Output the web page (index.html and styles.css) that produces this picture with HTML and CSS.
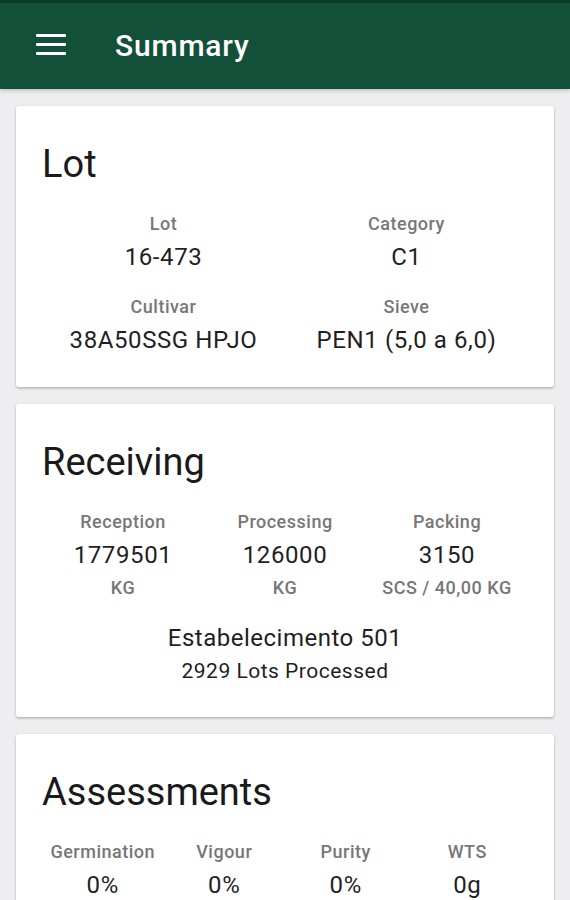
FILE: index.html
```html
<!DOCTYPE html>
<html lang="en">
<head>
<meta charset="utf-8">
<title>Summary</title>
<link rel="stylesheet" href="styles.css">
</head>
<body>
<header class="appbar">
  <span class="menu" aria-label="Menu">
    <span class="bar"></span><span class="bar"></span><span class="bar"></span>
  </span>
  <h1 class="appbar-title">Summary</h1>
</header>
<main class="content">
  <section class="card">
    <h2 class="card-title">Lot</h2>
    <div class="grid cols-2">
      <div class="item"><div class="label">Lot</div><div class="value">16-473</div></div>
      <div class="item"><div class="label">Category</div><div class="value">C1</div></div>
      <div class="item"><div class="label">Cultivar</div><div class="value">38A50SSG HPJO</div></div>
      <div class="item"><div class="label">Sieve</div><div class="value">PEN1 (5,0 a 6,0)</div></div>
    </div>
  </section>
  <section class="card">
    <h2 class="card-title">Receiving</h2>
    <div class="grid cols-3">
      <div class="item"><div class="label">Reception</div><div class="value">1779501</div><div class="unit">KG</div></div>
      <div class="item"><div class="label">Processing</div><div class="value">126000</div><div class="unit">KG</div></div>
      <div class="item"><div class="label">Packing</div><div class="value">3150</div><div class="unit">SCS / 40,00 KG</div></div>
    </div>
    <div class="place">
      <div class="place-name">Estabelecimento 501</div>
      <div class="place-lots">2929 Lots Processed</div>
    </div>
  </section>
  <section class="card">
    <h2 class="card-title">Assessments</h2>
    <div class="grid cols-4">
      <div class="item"><div class="label">Germination</div><div class="value">0%</div></div>
      <div class="item"><div class="label">Vigour</div><div class="value">0%</div></div>
      <div class="item"><div class="label">Purity</div><div class="value">0%</div></div>
      <div class="item"><div class="label">WTS</div><div class="value">0g</div></div>
    </div>
  </section>
</main>
</body>
</html>
```
FILE: styles.css
```css
* { box-sizing: border-box; }
html, body { margin: 0; padding: 0; }
body {
  background: #eeeef1;
  font-family: Roboto, "Liberation Sans", sans-serif;
  color: #212121;
  height: 900px;
  overflow: hidden;
}
.appbar {
  height: 89px;
  background: #13503a;
  border-top: 3px solid #0c3d2b;
  display: flex;
  align-items: center;
  padding-left: 36px;
  box-shadow: 0 2px 4px rgba(0,0,0,0.18);
  position: relative;
  z-index: 1;
}
.menu {
  width: 30px;
  display: flex;
  flex-direction: column;
  gap: 6px;
  margin-top: -3px;
}
.menu .bar {
  display: block;
  height: 3px;
  background: #ffffff;
  border-radius: 1px;
}
.appbar-title {
  margin: -1px 0 0 49px;
  color: #ffffff;
  font-size: 30px;
  font-weight: 500;
  line-height: 36px;
  letter-spacing: 0.8px;
}
.content {
  padding: 17px 16px 0;
  display: flex;
  flex-direction: column;
  gap: 17px;
}
.card {
  background: #ffffff;
  border-radius: 3px;
  box-shadow: 0 1px 3px rgba(0,0,0,0.22), 0 2px 2px rgba(0,0,0,0.08);
  padding: 36px 26px 33px 26px;
}
.card-title {
  margin: 0 0 27px 0;
  font-size: 38px;
  font-weight: 400;
  line-height: 44px;
  color: #1a1a1a;
}
.grid {
  display: grid;
  row-gap: 25px;
  text-align: center;
}
.cols-2 { grid-template-columns: repeat(2, 1fr); }
.cols-3 { grid-template-columns: repeat(3, 1fr); }
.cols-4 { grid-template-columns: repeat(4, 1fr); }
.label {
  font-size: 18px;
  font-weight: 500;
  line-height: 22px;
  letter-spacing: 0.5px;
  color: #777777;
}
.value {
  margin-top: 8px;
  font-size: 24px;
  line-height: 28px;
  letter-spacing: 0.6px;
  color: #1f1f1f;
}
.unit {
  margin-top: 8px;
  font-size: 18px;
  font-weight: 500;
  line-height: 22px;
  letter-spacing: 0.5px;
  color: #777777;
}
.place {
  margin-top: 24px;
  text-align: center;
}
.place-name {
  font-size: 24px;
  line-height: 30px;
  letter-spacing: 0.5px;
  color: #1f1f1f;
}
.place-lots {
  margin-top: 5px;
  font-size: 21px;
  line-height: 26px;
  letter-spacing: 0.5px;
  color: #1f1f1f;
}
```
